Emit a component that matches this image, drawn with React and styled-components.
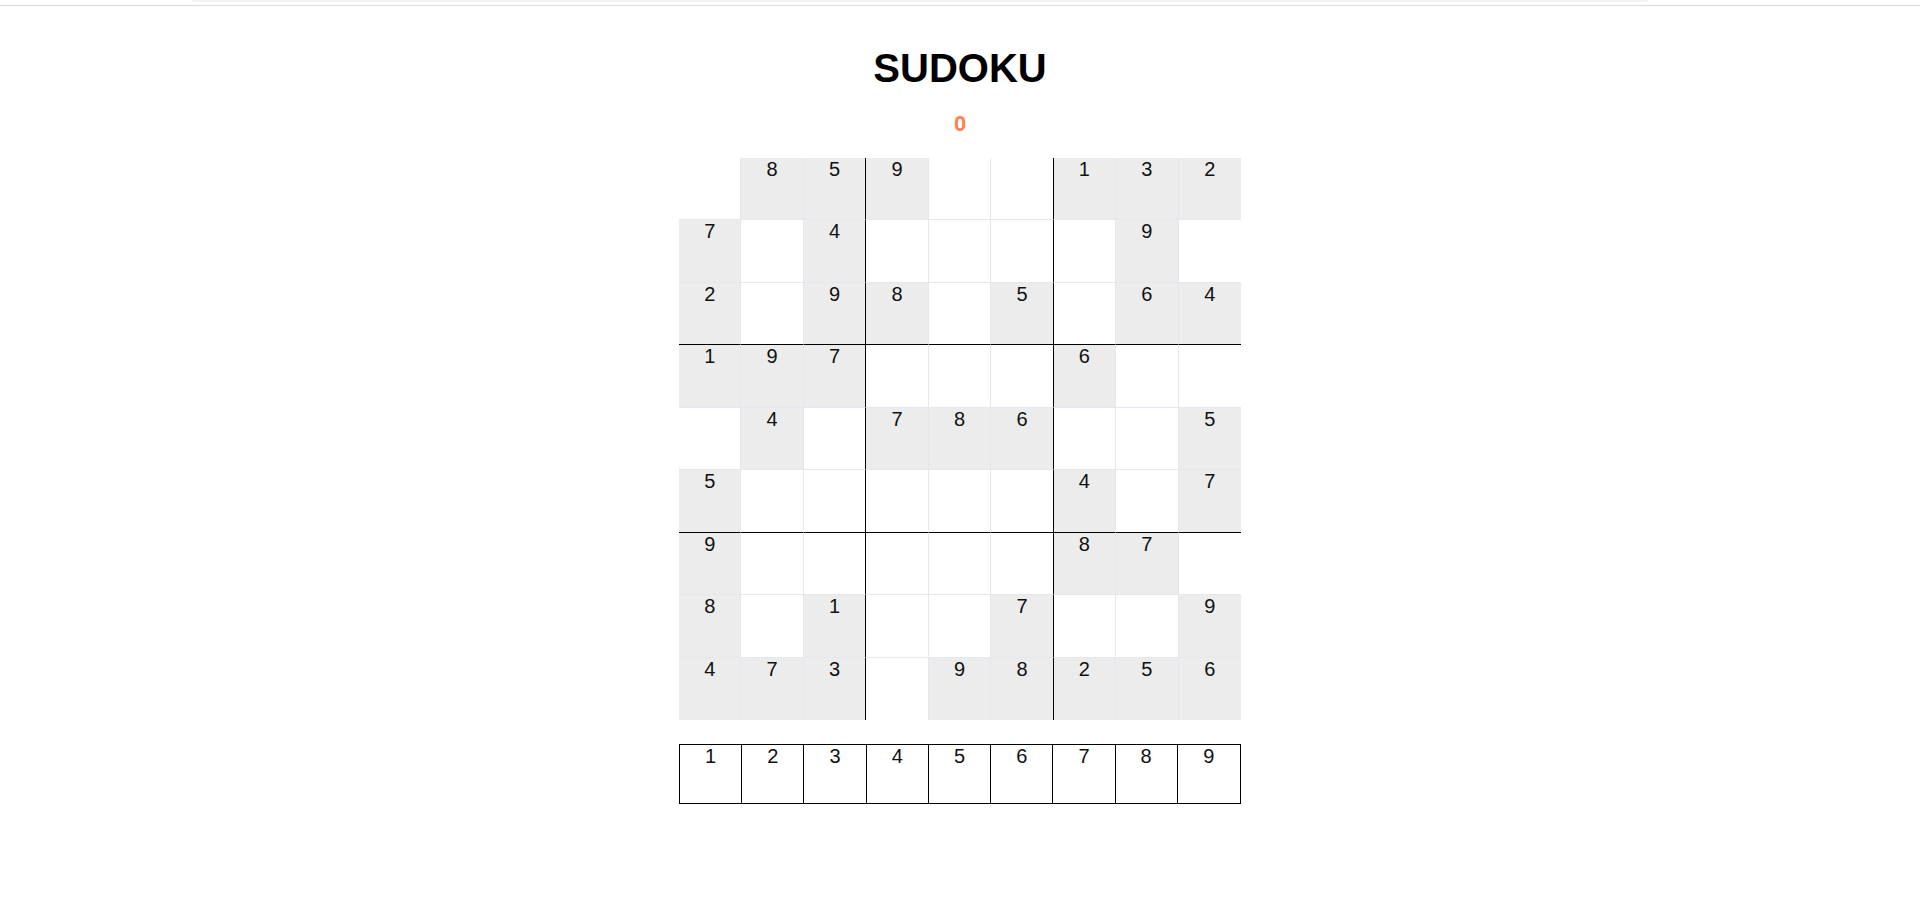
import React from "react";
import styled, { createGlobalStyle } from "styled-components";

const GlobalStyle = createGlobalStyle`
  html, body {
    margin: 0;
    padding: 0;
    background: #ffffff;
    font-family: "Liberation Sans", Arial, sans-serif;
    color: #000;
  }
  * { box-sizing: border-box; }
`;

const TopBar = styled.div`
  height: 6px;
  border-bottom: 1px solid #d9d9d9;
  display: flex;
  justify-content: flex-start;
  padding-left: 192px;
`;

const TopShade = styled.div`
  width: 1456px;
  height: 2px;
  background: #f2f2f2;
  border-radius: 0 0 3px 3px;
`;

const Main = styled.main`
  display: flex;
  flex-direction: column;
  align-items: center;
  padding-top: 40px;
`;

const Title = styled.h1`
  margin: 0;
  font-size: 40px;
  line-height: 45px;
  font-weight: 700;
  letter-spacing: 0;
`;

const Score = styled.div`
  margin-top: 20px;
  font-size: 22px;
  line-height: 25px;
  font-weight: 700;
  color: #ff7f50;
`;

const Board = styled.div`
  margin-top: 22px;
  width: 562px;
  height: 562px;
  display: grid;
  grid-template-columns: repeat(9, 1fr);
  grid-template-rows: repeat(9, 1fr);
`;

const Cell = styled.div`
  background: ${(p) => (p.$given ? "#ececec" : "#ffffff")};
  border-right: ${(p) =>
    p.$col === 8 ? "none" : p.$col % 3 === 2 ? "1px solid #000" : "1px solid #e6e6ee"};
  border-bottom: ${(p) =>
    p.$row === 8 ? "none" : p.$row % 3 === 2 ? "1px solid #000" : "1px solid #e6e6ee"};
  text-align: center;
  font-size: 20px;
  line-height: 23px;
  color: #111;
`;

const Pad = styled.div`
  margin-top: 24px;
  width: 562px;
  height: 60px;
  border: 1px solid #000;
  display: grid;
  grid-template-columns: repeat(9, 1fr);
`;

const PadKey = styled.div`
  border-right: ${(p) => (p.$last ? "none" : "1px solid #000")};
  text-align: center;
  font-size: 20px;
  line-height: 23px;
  color: #111;
  cursor: pointer;
`;

const puzzle = [
  "085900132",
  "704000090",
  "209805064",
  "197000600",
  "040786005",
  "500000407",
  "900000870",
  "801007009",
  "473098256",
];

export default function App() {
  return (
    <>
      <GlobalStyle />
      <TopBar>
        <TopShade />
      </TopBar>
      <Main>
        <Title>SUDOKU</Title>
        <Score>0</Score>
        <Board>
          {puzzle.map((row, r) =>
            row.split("").map((ch, c) => (
              <Cell key={`${r}-${c}`} $row={r} $col={c} $given={ch !== "0"}>
                {ch !== "0" ? ch : ""}
              </Cell>
            ))
          )}
        </Board>
        <Pad>
          {[1, 2, 3, 4, 5, 6, 7, 8, 9].map((n) => (
            <PadKey key={n} $last={n === 9}>
              {n}
            </PadKey>
          ))}
        </Pad>
      </Main>
    </>
  );
}
